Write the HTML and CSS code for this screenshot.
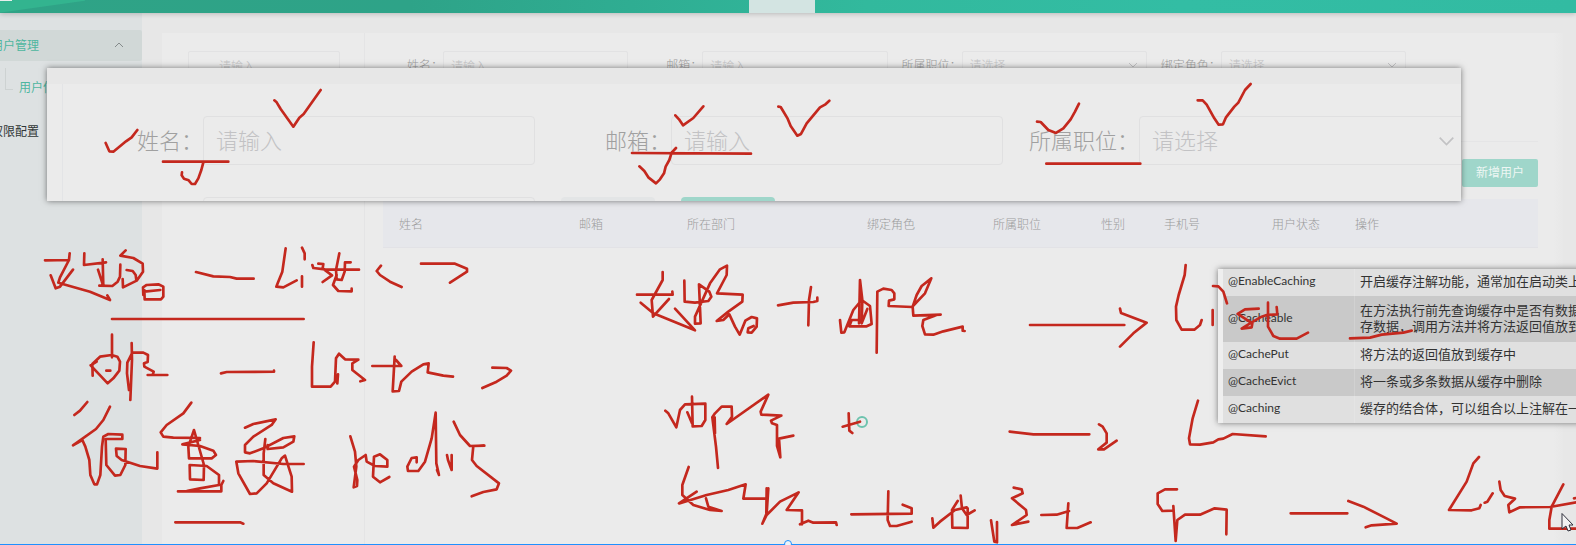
FILE: index.html
```html
<!DOCTYPE html>
<html lang="zh-CN">
<head>
<meta charset="utf-8">
<title>用户管理</title>
<link rel="stylesheet" href="styles.css">
</head>
<body>
<div class="screen">
  <header class="topbar">
    <span class="topbar-logo"></span>
    <span class="topbar-tab"></span>
  </header>
  <div class="layout">
    <nav class="sidebar">
      <a class="nav-item nav-open" href="#"><span>用户管理</span>
        <svg class="chevron" viewBox="0 0 10 6"><path d="M1 5 5 1 9 5"/></svg>
      </a>
      <a class="nav-sub" href="#">用户信息</a>
      <a class="nav-item nav-plain" href="#">权限配置</a>
    </nav>
    <main class="panel">
      <aside class="tree">
        <input class="field tree-search" type="text" placeholder="请输入" aria-label="搜索">
      </aside>
      <section class="content">
        <form class="filters">
          <div class="filter"><label for="name">姓名：</label><input class="field" id="name" type="text" placeholder="请输入"></div>
          <div class="filter"><label for="mail">邮箱：</label><input class="field" id="mail" type="text" placeholder="请输入"></div>
          <div class="filter"><label for="job">所属职位：</label>
            <div class="select-box"><select class="field" id="job"><option>请选择</option></select><svg class="chevron" viewBox="0 0 10 6"><path d="M1 1 5 5 9 1"/></svg></div></div>
          <div class="filter"><label for="role">绑定角色：</label>
            <div class="select-box"><select class="field" id="role"><option>请选择</option></select><svg class="chevron" viewBox="0 0 10 6"><path d="M1 1 5 5 9 1"/></svg></div></div>
        </form>
        <div class="actions"><button class="add-user" type="button">新增用户</button></div>
        <table class="users">
          <colgroup><col class="w180"><col class="w108"><col class="w180"><col class="w126"><col class="w108"><col class="w63"><col class="w108"><col class="w83"><col></colgroup>
          <thead><tr><th>姓名</th><th>邮箱</th><th>所在部门</th><th>绑定角色</th><th>所属职位</th><th>性别</th><th>手机号</th><th>用户状态</th><th>操作</th></tr></thead>
        </table>
      </section>
    </main>
  </div>

  <section class="magnifier">
    <div class="mag-strip"></div>
    <div class="mag-body">
      <div class="mag-row">
        <div class="mag-filter"><label for="mag-name">姓名：</label><input class="mag-field" id="mag-name" type="text" placeholder="请输入"></div>
        <div class="mag-filter"><label for="mag-mail">邮箱：</label><input class="mag-field" id="mag-mail" type="text" placeholder="请输入"></div>
        <div class="mag-filter"><label for="mag-job">所属职位：</label>
          <div class="mag-select"><select class="mag-field" id="mag-job"><option>请选择</option></select><svg class="chevron" viewBox="0 0 10 6"><path d="M1 1 5 5 9 1"/></svg></div></div>
      </div>
      <div class="mag-row mag-next">
        <input class="mag-field" type="text" aria-label="绑定角色">
        <button class="mag-button" type="button" aria-label="重置"></button>
        <button class="mag-button mag-primary" type="button" aria-label="查询"></button>
      </div>
    </div>
  </section>

  <table class="notes">
    <tr><td>@EnableCaching</td><td>开启缓存注解功能，通常加在启动类上</td></tr>
    <tr class="tall"><td>@Cacheable</td><td>在方法执行前先查询缓存中是否有数据<br>存数据，调用方法并将方法返回值放到</td></tr>
    <tr><td>@CachePut</td><td>将方法的返回值放到缓存中</td></tr>
    <tr><td>@CacheEvict</td><td>将一条或多条数据从缓存中删除</td></tr>
    <tr><td>@Caching</td><td>缓存的结合体，可以组合以上注解在一</td></tr>
  </table>

  <svg class="ink" viewBox="0 0 1576 545" aria-hidden="true">
    <circle class="spinner" cx="862" cy="422" r="5"/>
    <g class="pen" transform="scale(.33333)">
      <path d="M317 429 L328 454 340 455 378 424 395 412 412 390 M489 485H685 M610 487 L604 510 595 535 585 552 575 552 566 541 552 536 545 526 546 517 M823 301 L830 307 842 327 880 380 898 353 911 342 962 270"/>
    </g>
    <g class="pen" transform="translate(400 0) scale(.33333)">
      <path d="M826 346 L837 358 849 376 880 354 910 319 M696 459 L1053 461 M718 499 L733 513 745 532 768 550 780 538 792 520 797 500 808 480 815 458 828 444 M1135 320 L1142 321 1163 356 1172 378 1192 407 1203 402 1220 370 1235 352 1260 322 1275 314 1288 302"/>
    </g>
    <g class="pen" transform="translate(800 0) scale(.33333)">
      <path d="M711 365 L722 366 745 390 768 399 790 385 812 358 825 335 837 311 M739 491H1021"/>
    </g>
    <g class="pen" transform="translate(1176 0) scale(.33333)">
      <path d="M65 301 L80 301 92 314 115 355 128 374 141 373 150 352 175 320 187 308 207 270 224 252"/>
    </g>
    <g class="pen" transform="translate(0 200) scale(.33333)">
      <path d="M135 181 L207 180 209 160 M207 180 L180 232 175 248 M152 226 L167 265 180 260 219 209 M180 250 L270 275 330 300 322 286 M253 160 L252 195 318 187 M308 178 L310 258 294 209 M298 257 L337 258 353 245 360 230 361 194 M377 151 L361 167 400 174 428 191 429 215 410 242 369 262 368 237 M380 210 L398 213 407 225 409 240"/>
      <path d="M430 285 L429 262 440 255 475 253 490 260 490 290 483 298 434 298 433 270 M433 275 L481 270 M588 216 L640 229 690 231 710 236 761 236 M857 145 L847 215 833 250 829 260 850 262 890 241 M906 143 L914 160 914 178 M906 229V260 M336 357H911"/>
      <path d="M336 404V472 M278 527 L277 492 300 470 335 465 352 470 360 485 358 512 340 535 323 550 272 496 290 485 M319 512H331 M395 429 L396 480 391 600 M387 570 L381 520 382 488 397 458 430 458 444 465 443 486 432 490 433 500 461 515 458 525 M443 525H502 M663 520 L680 516 822 515 822 512"/>
      <path d="M223 645 L240 632 262 606 M330 620 L310 660 288 687 219 736 247 720 256 740 268 780 271 825 283 853 291 853 301 825 306 740 310 710 325 702 367 704 367 717 317 717 319 795 345 827 361 825 376 795 377 747 348 746 350 768 365 780 420 798 472 806 472 757"/>
      <path d="M574 608 L550 640 500 675 482 697 490 710 520 713 600 714 M582 690 L565 740 567 775 635 775 648 765 640 752 600 738 547 733 600 720 M582 690 L612 795 611 840 570 838 569 795 620 798 657 825 657 855 600 865 560 873 534 874H664L664 855 670 843"/>
      <path d="M735 683 L760 672 827 658 815 675 760 710 735 735 735 757 750 760 790 745 850 714 883 709 880 725 850 742 803 747 803 735 M796 717 L791 760 791 825 820 850 876 875 875 830 855 767 845 775 800 850 770 880 750 882 715 820 709 785 760 783 850 792 911 792 M526 967 L720 967 730 971"/>
    </g>
    <g class="pen" transform="translate(300 200) scale(.33333)">
      <path d="M37 195 L40 204 75 208 177 209 M55 191 L70 192 68 205 96 226 68 246 M118 160 L108 210 110 238 125 240 134 215 135 187 152 187 M110 225 L99 255 115 273 155 274 155 266 M243 197 L230 213 240 225 270 245 305 261 M363 191 L465 191 501 206 501 215 450 248"/>
      <path d="M41 427 L36 500 36 560 92 560 105 545 108 475 117 461 135 478 175 479 157 490 157 510 195 540 181 544 M114 523 L112 550 M217 498 L304 498 288 480 M284 470 L278 574 297 573 304 545 335 515 370 493 386 490 383 517 430 527 459 530 M577 503 L620 504 633 512 620 527 590 545 547 564"/>
      <path d="M151 709 L165 755 169 800 161 862 171 858 172 840 162 800 175 780 197 765 200 785 225 798 262 800 262 780 240 763 222 770 219 830 240 847 268 831 M350 787 L350 772 335 774 322 800 324 813 355 813 375 785 395 715 407 638 409 790 417 825 411 810 M441 765 L444 780 455 810 455 765 M461 665 L480 705 510 738 553 737 520 738 516 780 530 798 597 850 590 868 550 876 515 889"/>
    </g>
    <g class="pen" transform="translate(600 200) scale(.33333)">
      <path d="M111 284 L218 284 217 275 M188 216 L188 240 155 300 159 350 207 297 M122 308 L160 340 285 391 225 326 M253 242 L254 305 285 308 325 303 334 290 328 275 297 253 302 370 285 371 285 350 330 250 360 208 381 197 380 225 351 280 428 284 427 305 385 335 350 363 370 360 388 343 405 380 419 404 436 362 455 351 471 355 470 380 455 398 443 397 445 385 461 378"/>
      <path d="M534 316 L580 308 640 306 652 303 652 293 M633 261 L627 300 625 376 M720 360 L724 398 733 397 760 330 785 300 810 318 815 372 800 379 748 379 755 360 775 360 M780 240 L787 300 785 370 802 327 M780 240 L777 370 M830 458 L832 275 850 266 875 270 883 280 883 298 867 302 866 318 936 321 975 280 994 235 965 258 950 285 938 320 940 347 1022 344 M1010 345 L970 360 967 378 975 403 1000 404 1030 394 1088 380 1088 392 1094 393"/>
      <path d="M196 632 L205 640 229 682 240 630 255 613 316 611 316 660 305 678 278 679 276 590 M262 637 L276 670 M337 652 L348 740 354 804 M344 652 L345 700 M337 652 L345 640 365 620 395 620 396 650 380 672 505 584 482 635 484 644 544 647 513 662 516 670 531 675 531 738 541 772 537 716 580 707 M728 680 L780 665 M746 640 L748 692 757 699"/>
      <path d="M266 801 L247 855 247 885 280 915 330 930 365 933 325 920 318 895 M237 910 L290 875 M240 910 L320 885 385 870 437 853 430 896 500 896 505 865 500 940 487 971 500 945 540 905 596 877 560 930 606 931 606 973 M500 865 499 940 M600 973 L625 962 640 968 708 967 710 975 M754 943 L935 941 935 925 908 914 M865 874 L863 960 870 978 890 978 935 965"/>
    </g>
    <g class="pen" transform="translate(900 200) scale(.33333)">
      <path d="M390 375H673 M660 326 L663 339 740 368 700 400 660 440 M857 195 L854 225 836 285 828 320 829 360 845 389 883 389 900 375 905 360 M939 258 L955 259 970 275 981 310 M938 330V375 M329 695 L400 703 568 703 M597 673 L608 680 620 700 620 728 595 748 612 748 650 722 M894 602 L878 655 867 715 870 733 900 734 940 727 955 718 970 716 998 702 1097 709"/>
      <path d="M97 955 L100 983 120 965 165 930 200 922 M173 903 L156 930 157 983 203 984 203 925 M182 887 L186 925 200 945 224 931 M273 961 L283 1025 291 1027 291 966 M341 863 L365 868 368 880 336 895 378 930 380 945 336 975 385 965 M424 945 L470 944 507 933 M505 910 L500 984 532 984 572 967 M831 868 L795 868 773 880 773 912 787 933 817 932 M820 918 L827 1023 832 960 855 944 900 944 944 925 980 929 979 1003"/>
    </g>
    <g class="pen" transform="translate(1200 200) scale(.33333)">
      <path d="M176 326 L135 328 113 342 157 370 155 382 125 386 150 370 185 350 200 345 232 343 230 321 M204 308 L204 380 220 408 240 416 290 416 324 398 M450 415 L510 413 545 404 610 398 635 392 M272 940H442 M445 903 L490 920 555 953 590 971 515 976 497 982"/>
      <path d="M837 771 L820 790 800 845 747 930 815 931 838 925 842 915 M854 908 L862 905 878 880 M898 845 L902 870 914 888 945 896 925 915 928 937 960 922 1050 921 1135 906 M1090 853 L1055 920 1048 960 1048 986 1135 986 M1122 895 L1135 893"/>
    </g>
    <path class="cursor" d="M1562 513.500v15.500l4-3 2 5 3-1-2-5h4z"/>
  </svg>
  <div class="frame-edge"><span class="frame-handle"></span></div>
</div>
</body>
</html>
```
FILE: styles.css
```css
* { box-sizing: border-box; }

body {
  margin: 0;
  background: #e7e7e7;
  color: #9b9b9b;
  font: 300 12px/16px "Noto Sans CJK SC", sans-serif;
}

.screen {
  position: relative;
  display: flex;
  flex-direction: column;
  min-height: 100vh;
  overflow: hidden;
}

input, select, button { margin: 0; font: inherit; outline: 0; }
a { color: inherit; text-decoration: none; }

/* Top bar */
.topbar {
  position: relative;
  display: flex;
  justify-content: center;
  height: 13px;
  padding-right: 12px;
  background:
    linear-gradient(172deg, #33b48f 0 12px, transparent 13px) 0 0 / 85px 13px no-repeat,
    linear-gradient(90deg, #2fa386 0%, #2ea388 26%, #2fad92 40%, #32b99d 55%, #33bda4 75%, #32bba2 100%);
  box-shadow: 0 1px 5px rgba(0, 0, 0, .2);
}
.topbar-tab { width: 66px; background: #d3e4e2; }
.topbar-logo {
  position: absolute;
  left: 0;
  top: 0;
  width: 12px;
  height: 1px;
  background: #e6efed;
}

.layout { display: flex; flex: 1; }

/* Sidebar */
.sidebar {
  display: flex;
  flex-direction: column;
  flex: none;
  width: 142px;
  padding-top: 17px;
  background: #dde1e2;
  font-weight: 400;
}
.nav-item {
  display: flex;
  align-items: center;
  justify-content: space-between;
  height: 31px;
  margin-left: -9px;
  padding: 0 18px 2px 0;
}
.nav-open { background: #d1d8d7; color: #4db69f; border-radius: 0 2px 2px 0; }
.nav-open .chevron { width: 10px; stroke: #858b8b; }
.nav-sub {
  position: relative;
  height: 55px;
  padding: 18px 0 0 19px;
  color: #4db69f;
}
.nav-sub::before {
  content: "";
  position: absolute;
  left: 5px;
  top: 7px;
  width: 7px;
  height: 21px;
  border: solid #cdd2d2;
  border-width: 0 0 1px 1px;
}
.nav-plain { color: #303636; }

.chevron { display: block; fill: none; stroke: #c2c2c4; stroke-width: 1; }

/* Main panel */
.panel {
  display: flex;
  flex: 1;
  margin: 20px 13px 0 20px;
  background: linear-gradient(90deg, #ebebeb calc(100% - 10px), #e8e8e8);
}
.tree {
  flex: none;
  width: 203px;
  padding: 18px 24px 0 26px;
  border-right: 1px solid #e4e4e5;
}
.content { flex: 1; min-width: 0; padding: 18px 25px 0 18px; }

.field {
  display: block;
  flex: 1;
  width: 100%;
  min-width: 0;
  height: 28px;
  padding: 0 7px;
  border: 1px solid #e2e2e3;
  border-radius: 2px;
  background: #ebebeb;
  color: #c2c2c4;
  appearance: none;
}
.field::placeholder, .mag-field::placeholder { color: #c2c2c4; opacity: 1; }
.tree-search { padding-left: 30px; }

.filters {
  display: grid;
  grid-template-columns: repeat(4, 1fr);
  column-gap: 14px;
  height: 91px;
  padding-right: 132px;
  border-bottom: 1px solid #e5e5e6;
}
.filter { display: flex; height: 28px; align-items: center; }
.filter label { flex: none; width: 60px; text-align: right; }
.select-box { position: relative; flex: 1; }
.select-box .chevron { position: absolute; right: 9px; top: 11px; width: 10px; }

.actions { display: flex; justify-content: flex-end; padding: 17px 0 12px; }
.add-user {
  width: 76px;
  height: 28px;
  padding: 0 0 2px;
  border: 0;
  border-radius: 2px;
  background: #9fd6ca;
  color: #eef6f4;
  font-weight: 400;
}

.users { width: 100%; table-layout: fixed; border-collapse: collapse; }
.users th {
  height: 48px;
  padding: 2px 0 0 16px;
  border-bottom: 1px solid #e2e2e6;
  background: #e6e7eb;
  font-weight: 300;
  text-align: left;
}
.w180 { width: 180px; }
.w108 { width: 108px; }
.w126 { width: 126px; }
.w63 { width: 63px; }
.w83 { width: 83px; }

/* Enlarged view floating over the page */
.magnifier {
  position: absolute;
  left: 47px;
  top: 68px;
  right: 115px;
  height: 133px;
  overflow: hidden;
  background: #ebebeb;
  box-shadow: 0 0 6px rgba(0, 0, 0, .5);
  color: #a0a0a0;
  font-size: 22px;
  line-height: 30px;
}
.mag-strip { height: 16px; background: #e7e7e7; }
.mag-body {
  margin-left: 15px;
  padding: 32px 0 0 30px;
  border-left: 1px solid #e3e4e6;
}
.mag-row { display: flex; gap: 26px; }
.mag-filter { display: flex; flex: none; align-items: center; }
.mag-filter label { width: 110px; padding-bottom: 4px; text-align: right; }
.mag-field {
  display: block;
  width: 332px;
  height: 49px;
  padding: 0 12px 4px;
  border: 1px solid #e0e0e1;
  border-radius: 4px;
  background: #ebebeb;
  color: #c2c2c4;
  appearance: none;
}
.mag-select { position: relative; }
.mag-select .chevron { position: absolute; right: 16px; top: 20px; width: 17px; }
.mag-next { margin-top: 32px; padding-left: 110px; }
.mag-button {
  width: 94px;
  height: 49px;
  border: 0;
  border-radius: 4px;
  background: #e3e5e6;
}
.mag-primary { background: #9fd6ca; }

/* Annotation notes */
.notes {
  position: absolute;
  left: 1218px;
  top: 269px;
  width: 368px;
  table-layout: fixed;
  border-collapse: collapse;
  border-left: 5px solid #efefef;
  background: #e0e0e0;
  box-shadow: 0 0 6px rgba(0, 0, 0, .5);
  color: #333;
  font-weight: 400;
  white-space: nowrap;
}
.notes tr { height: 27px; }
.notes .tall { height: 46px; }
.notes tr:nth-child(even) { background: #c9c9c9; }
.notes td { padding: 0 5px 3px; font-size: 13px; }
.notes td:first-child {
  width: 134px;
  border-right: 1px solid rgba(255, 255, 255, .15);
  font: 12px/16px Lato, sans-serif;
}

/* Freehand drawing layer */
.ink {
  position: absolute;
  left: 0;
  top: 0;
  width: 1576px;
  height: 545px;
  pointer-events: none;
}
.pen {
  fill: none;
  stroke: #c4281e;
  stroke-width: 8;
  stroke-linecap: round;
  stroke-linejoin: round;
}
.spinner { fill: none; stroke: #6dc3ae; stroke-width: 2; }
.cursor { fill: #f3f3f3; stroke: #30303c; stroke-width: 1; }

.frame-edge {
  position: absolute;
  left: 0;
  right: 0;
  bottom: 0;
  height: 1px;
  background: #1e90ff;
}
.frame-handle {
  position: absolute;
  left: 50%;
  top: -4px;
  width: 8px;
  height: 8px;
  margin-left: -4px;
  border: 1px solid #1e90ff;
  border-radius: 50%;
  background: #eef3f8;
}
```
